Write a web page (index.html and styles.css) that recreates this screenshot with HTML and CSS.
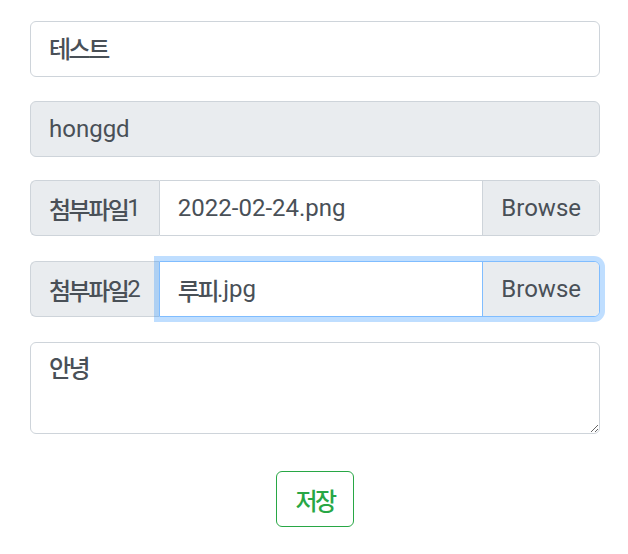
FILE: index.html
```html
<!DOCTYPE html>
<html lang="ko">
<head>
<meta charset="utf-8">
<link rel="stylesheet" href="styles.css">
</head>
<body>
<form class="wrap">
  <div class="row r1">
    <input class="control ko-input" type="text" value="테스트">
  </div>
  <div class="row r2">
    <input class="control readonly" type="text" value="honggd" readonly>
  </div>
  <div class="row r3 group">
    <span class="addon"><span class="ko">첨부파일</span>1</span>
    <div class="file">
      <span class="file-name">2022-02-24.png</span>
      <span class="browse">Browse</span>
    </div>
  </div>
  <div class="row r4 group">
    <span class="addon"><span class="ko">첨부파일</span>2</span>
    <div class="file focused">
      <span class="file-name"><span class="ko">루피</span>.jpg</span>
      <span class="browse">Browse</span>
    </div>
  </div>
  <div class="row r5">
    <textarea class="control area ko-input" rows="2">안녕</textarea>
  </div>
  <div class="actions">
    <button type="button" class="btn-save ko-input">저장</button>
  </div>
</form>
</body>
</html>
```

FILE: styles.css
```css
html, body {
  margin: 0;
  padding: 0;
  background: #fff;
}
body {
  font-family: Roboto, "Noto Sans CJK KR", sans-serif;
  font-size: 24px;
  color: #495057;
}
.ko,
.ko-input {
  font-weight: 500;
  letter-spacing: -2.5px;
}
.wrap {
  width: 570px;
  padding: 21px 0 0 30px;
}
.row { display: block; }
.r1 { margin-bottom: 24px; }
.r2 { margin-bottom: 23px; }
.r3 { margin-bottom: 25px; }
.r4 { margin-bottom: 25px; }
.r5 { margin-bottom: 37px; }

.control {
  box-sizing: border-box;
  display: block;
  width: 100%;
  height: 56px;
  margin: 0;
  padding: 7px 18px 11px;
  font-family: inherit;
  font-size: inherit;
  color: #495057;
  background: #fff;
  border: 1px solid #ced4da;
  border-radius: 6px;
  outline: none;
}
.readonly {
  background: #e9ecef;
  padding: 9px 18px;
}
.area {
  height: 92px;
  line-height: 36px;
  padding-top: 8px;
  resize: vertical;
}

.group {
  display: flex;
  height: 56px;
}
.addon {
  box-sizing: border-box;
  display: flex;
  align-items: center;
  padding: 0 18px;
  background: #e9ecef;
  border: 1px solid #ced4da;
  border-right: none;
  border-radius: 6px 0 0 6px;
  white-space: nowrap;
}
.file {
  box-sizing: border-box;
  flex: 1;
  display: flex;
  align-items: stretch;
  border: 1px solid #ced4da;
  border-radius: 0 6px 6px 0;
  background: #fff;
  overflow: hidden;
}
.file-name {
  flex: 1;
  display: flex;
  align-items: center;
  padding: 0 18px;
}
.browse {
  display: flex;
  align-items: center;
  padding: 0 18px;
  background: #e9ecef;
  border-left: 1px solid #ced4da;
}
.focused {
  border-color: #80bdff;
  box-shadow: 0 0 0 5px rgba(0, 123, 255, 0.25);
}
.focused .browse { border-left-color: #80bdff; }

.actions {
  display: flex;
  justify-content: center;
}
.btn-save {
  box-sizing: border-box;
  height: 56px;
  padding: 0 18px;
  font-family: inherit;
  font-size: inherit;
  color: #28a745;
  background: #fff;
  border: 1px solid #28a745;
  border-radius: 6px;
  cursor: pointer;
}
```
